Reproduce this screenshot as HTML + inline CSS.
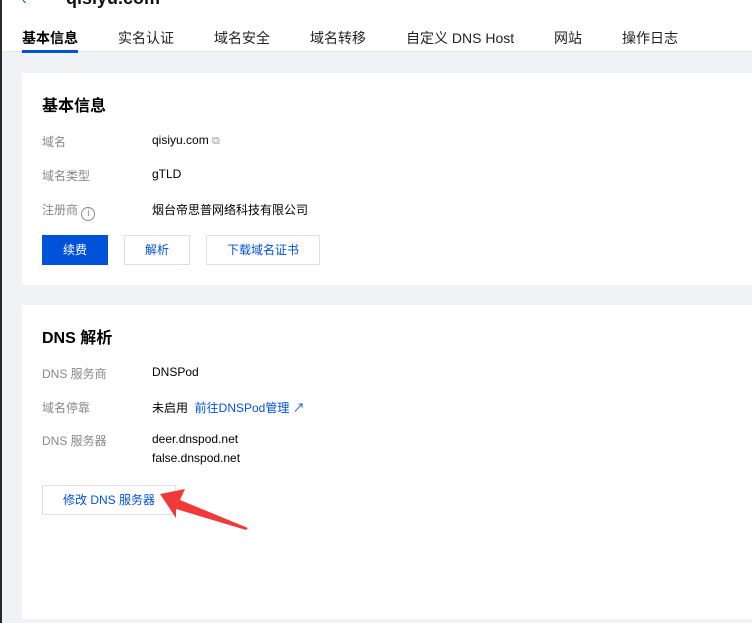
<!DOCTYPE html>
<html><head><meta charset="utf-8"><style>
*{margin:0;padding:0;box-sizing:border-box}
body{width:752px;height:623px;overflow:hidden;background:#f1f2f5;font-family:"Liberation Sans","Noto Sans CJK SC",sans-serif;font-size:12px;color:#000;position:relative}
.abs{position:absolute;white-space:nowrap}
.top{position:absolute;left:0;top:0;width:752px;height:52px;background:#fff;border-bottom:1px solid #e5e7ec}
.strip{position:absolute;left:0;top:0;width:2px;height:623px;background:#2a2a2a}
.tab{position:absolute;top:28px;font-size:14px;color:#222}
.card{position:absolute;left:22px;width:730px;background:#fff}
.lab{color:#888}
.btn{position:absolute;height:30px;border:1px solid #dcdfe6;background:#fff;color:#0052d9;text-align:center;line-height:28px;font-size:12px}
</style></head><body>
<div class="top">
<div class="abs" style="left:66px;top:-12px;font-size:18px;font-weight:bold;color:#111">qisiyu.com</div>
<div class="abs" style="left:22px;top:-9px;color:#0052d9;font-size:14px">‹</div>
<div class="tab" style="left:22px;font-weight:bold;color:#000">基本信息</div>
<div style="position:absolute;left:22px;top:50px;width:56px;height:3px;background:#0052d9"></div>
<div class="tab" style="left:118px">实名认证</div>
<div class="tab" style="left:214px">域名安全</div>
<div class="tab" style="left:310px">域名转移</div>
<div class="tab" style="left:406px">自定义 DNS Host</div>
<div class="tab" style="left:554px">网站</div>
<div class="tab" style="left:622px">操作日志</div>
</div>
<div class="strip"></div>
<div class="card" style="top:73px;height:212px"></div>
<div class="abs" style="left:42px;top:92px;font-size:16px;font-weight:bold">基本信息</div>
<div class="abs lab" style="left:42px;top:133px">域名</div>
<div class="abs" style="left:152px;top:133px">qisiyu.com <span style="color:#999;font-size:11px">⧉</span></div>
<div class="abs lab" style="left:42px;top:167px">域名类型</div>
<div class="abs" style="left:152px;top:167px">gTLD</div>
<div class="abs lab" style="left:42px;top:201px">注册商 <span style="display:inline-block;width:14px;height:14px;border:1px solid #888;border-radius:50%;font-size:10px;text-align:center;line-height:12px;vertical-align:-2px">i</span></div>
<div class="abs" style="left:152px;top:201px">烟台帝思普网络科技有限公司</div>
<div class="btn" style="left:42px;top:235px;width:66px;background:#0052d9;border-color:#0052d9;color:#fff">续费</div>
<div class="btn" style="left:124px;top:235px;width:66px">解析</div>
<div class="btn" style="left:206px;top:235px;width:114px">下载域名证书</div>
<div class="card" style="top:305px;height:314px"></div>
<div class="abs" style="left:42px;top:324px;font-size:16px;font-weight:bold">DNS 解析</div>
<div class="abs lab" style="left:42px;top:365px">DNS 服务商</div>
<div class="abs" style="left:152px;top:365px">DNSPod</div>
<div class="abs lab" style="left:42px;top:399px">域名停靠</div>
<div class="abs" style="left:152px;top:399px">未启用 &nbsp;<span style="color:#0052d9">前往DNSPod管理 ↗</span></div>
<div class="abs lab" style="left:42px;top:432px">DNS 服务器</div>
<div class="abs" style="left:152px;top:432px">deer.dnspod.net</div>
<div class="abs" style="left:152px;top:451px">false.dnspod.net</div>
<div class="btn" style="left:42px;top:485px;width:134px">修改 DNS 服务器</div>
<svg style="position:absolute;left:0;top:0" width="752" height="623"><polygon points="160,494 185,489 180,500 248,528 246,530 176,509 176,518" fill="#f03a3a"/></svg>
</body></html>
